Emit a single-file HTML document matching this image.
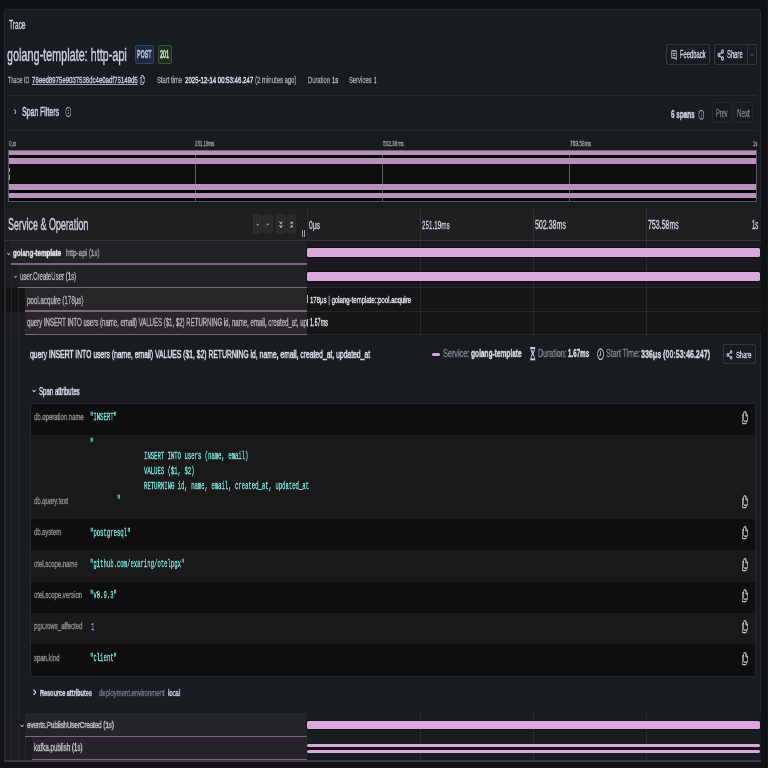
<!DOCTYPE html>
<html><head><meta charset="utf-8"><style>
html,body{margin:0;padding:0;width:768px;height:768px;overflow:hidden;background:#111217}
.r{position:absolute;margin:0;padding:0}
.t{position:absolute;white-space:pre;line-height:0;transform-origin:0 0;font-family:"Liberation Sans",sans-serif;-webkit-text-stroke:0.45px currentColor;will-change:transform}
</style></head><body>
<div class="r" style="left:0.00px;top:0.00px;width:768.00px;height:768.00px;background:#111217;"></div>
<div class="r" style="left:761.50px;top:9.00px;width:6.50px;height:759.00px;background:#101115;"></div>
<div class="r" style="left:766.50px;top:0.00px;width:1.50px;height:768.00px;background:#16171b;"></div>
<div class="r" style="left:3.70px;top:9.40px;width:757.80px;height:752.20px;box-sizing:border-box;border:1px solid #26282c;background:#181b1f;border-radius:3px;"></div>
<div class="t" style="left:8.75px;top:24.59px;font-size:11.92px;font-family:'Liberation Sans', sans-serif;font-weight:normal;color:#ccccdc;transform:scaleX(0.5494);">Trace</div>
<div class="t" style="left:7.44px;top:54.77px;font-size:17.87px;font-family:'Liberation Sans', sans-serif;font-weight:normal;color:#ccccdc;transform:scaleX(0.6064);">golang-template: http-api</div>
<div class="r" style="left:134.90px;top:45.20px;width:19.30px;height:19.20px;box-sizing:border-box;border:1px solid #2d4466;background:#1e2a3c;border-radius:2px;"></div>
<div class="t" style="left:136.84px;top:54.29px;font-size:11.63px;font-family:'Liberation Sans', sans-serif;font-weight:bold;color:#a9bde6;transform:scaleX(0.4617);">POST</div>
<div class="r" style="left:158.10px;top:45.20px;width:13.60px;height:19.20px;box-sizing:border-box;border:1px solid #36543a;background:#1f2b21;border-radius:2px;"></div>
<div class="t" style="left:160.31px;top:54.35px;font-size:11.46px;font-family:'Liberation Sans', sans-serif;font-weight:bold;color:#b9dfa8;transform:scaleX(0.4728);">201</div>
<div class="t" style="left:8.37px;top:79.69px;font-size:9.88px;font-family:'Liberation Sans', sans-serif;font-weight:normal;color:#a0a1aa;transform:scaleX(0.5726);">Trace ID</div>
<div class="t" style="left:31.99px;top:79.69px;font-size:9.88px;font-family:'Liberation Sans', sans-serif;font-weight:normal;color:#ccccdc;transform:scaleX(0.6128);">78eed8975e9037536dc4e0adf75149d5</div>
<div class="r" style="left:31.90px;top:84.30px;width:106.00px;height:0.80px;background:#a4a4ae;"></div>
<svg class="r" style="left:139.23px;top:74.23px;width:6.93px;height:11.64px;" viewBox="0 0 24 24" preserveAspectRatio="none"><path d="M21,8.94a1.31,1.31,0,0,0-.06-.27l0-.09a1.07,1.07,0,0,0-.19-.28h0l-6-6h0a1.07,1.07,0,0,0-.28-.19.32.32,0,0,0-.09,0A.88.88,0,0,0,14.05,2H10A3,3,0,0,0,7,5V6H6A3,3,0,0,0,3,9V19a3,3,0,0,0,3,3h8a3,3,0,0,0,3-3V18h1a3,3,0,0,0,3-3V9S21,9,21,8.94ZM15,5.41,17.59,8H16a1,1,0,0,1-1-1ZM15,19a1,1,0,0,1-1,1H6a1,1,0,0,1-1-1V9A1,1,0,0,1,6,8H7v7a3,3,0,0,0,3,3h5Zm4-4a1,1,0,0,1-1,1H10a1,1,0,0,1-1-1V5a1,1,0,0,1,1-1h3V7a3,3,0,0,0,3,3h3Z" fill="#b8b8c2"/></svg>
<div class="t" style="left:157.13px;top:79.69px;font-size:9.88px;font-family:'Liberation Sans', sans-serif;font-weight:normal;color:#a0a1aa;transform:scaleX(0.5942);">Start time</div>
<div class="t" style="left:184.79px;top:79.74px;font-size:9.74px;font-family:'Liberation Sans', sans-serif;font-weight:normal;color:#d4d4de;transform:scaleX(0.6236);-webkit-text-stroke:0.65px currentColor">2025-12-14 00:53:46.247</div>
<div class="t" style="left:255.33px;top:79.69px;font-size:9.88px;font-family:'Liberation Sans', sans-serif;font-weight:normal;color:#a0a1aa;transform:scaleX(0.6049);">(2 minutes ago)</div>
<div class="t" style="left:307.92px;top:79.69px;font-size:9.88px;font-family:'Liberation Sans', sans-serif;font-weight:normal;color:#a0a1aa;transform:scaleX(0.5876);">Duration</div>
<div class="t" style="left:331.86px;top:79.69px;font-size:9.88px;font-family:'Liberation Sans', sans-serif;font-weight:normal;color:#b4b5bd;transform:scaleX(0.5788);">1s</div>
<div class="t" style="left:349.14px;top:79.69px;font-size:9.88px;font-family:'Liberation Sans', sans-serif;font-weight:normal;color:#a0a1aa;transform:scaleX(0.5904);">Services</div>
<div class="t" style="left:374.16px;top:79.69px;font-size:9.88px;font-family:'Liberation Sans', sans-serif;font-weight:normal;color:#b4b5bd;transform:scaleX(0.4459);">1</div>
<div class="r" style="left:666.40px;top:44.20px;width:43.80px;height:20.60px;box-sizing:border-box;border:1px solid #34363b;background:#181b1f;border-radius:2px;"></div>
<svg class="r" style="left:670.50px;top:49.50px;width:6.00px;height:10.50px;" viewBox="0 0 24 24" preserveAspectRatio="none"><path d="M3 2h18v20l-4.5-4H3z" fill="none" stroke="#ccccdc" stroke-width="3" stroke-linejoin="round"/><path d="M7 8h10M7 12h10" stroke="#ccccdc" stroke-width="2.4"/></svg>
<div class="t" style="left:680.17px;top:54.84px;font-size:10.32px;font-family:'Liberation Sans', sans-serif;font-weight:normal;color:#ccccdc;transform:scaleX(0.5631);">Feedback</div>
<div class="r" style="left:713.60px;top:44.20px;width:43.30px;height:20.60px;box-sizing:border-box;border:1px solid #34363b;background:#181b1f;border-radius:2px;"></div>
<div class="r" style="left:746.60px;top:44.20px;width:1.00px;height:20.60px;background:#34363b;"></div>
<svg class="r" style="left:717.10px;top:48.90px;width:7.50px;height:12.00px;" viewBox="0 0 24 24" preserveAspectRatio="none"><circle cx="17.5" cy="5" r="3" fill="none" stroke="#ccccdc" stroke-width="2.8"/><circle cx="6" cy="12" r="3" fill="none" stroke="#ccccdc" stroke-width="2.8"/><circle cx="17.5" cy="19" r="3" fill="none" stroke="#ccccdc" stroke-width="2.8"/><path d="M8.5 10.5L15 6.5M8.5 13.5l6.5 4" stroke="#ccccdc" stroke-width="2.6"/></svg>
<div class="t" style="left:727.13px;top:54.84px;font-size:10.32px;font-family:'Liberation Sans', sans-serif;font-weight:normal;color:#ccccdc;transform:scaleX(0.5712);">Share</div>
<svg class="r" style="left:749.50px;top:52.50px;width:4.00px;height:4.00px;" viewBox="0 0 24 24" preserveAspectRatio="none"><path d="M5 8l7 8 7-8" fill="none" stroke="#ccccdc" stroke-width="3"/></svg>
<div class="r" style="left:8.10px;top:94.70px;width:748.70px;height:1.00px;background:#26282c;"></div>
<div class="r" style="left:8.10px;top:130.10px;width:748.70px;height:1.00px;background:#26282c;"></div>
<svg class="r" style="left:13.80px;top:108.70px;width:2.50px;height:5.80px;" viewBox="0 0 24 24" preserveAspectRatio="none"><path d="M3 2l18 10-18 10" fill="none" stroke="#dcdce4" stroke-width="5"/></svg>
<div class="t" style="left:22.49px;top:112.14px;font-size:12.06px;font-family:'Liberation Sans', sans-serif;font-weight:normal;color:#ccccdc;transform:scaleX(0.5743);-webkit-text-stroke:0.6px currentColor">Span Filters</div>
<svg class="r" style="left:64.60px;top:106.00px;width:6.80px;height:12.00px;" viewBox="0 0 24 24" preserveAspectRatio="none"><path d="M12,2A10,10,0,1,0,22,12,10,10,0,0,0,12,2Zm0,18a8,8,0,1,1,8-8A8,8,0,0,1,12,20Zm0-8.5a1,1,0,0,0-1,1v3a1,1,0,0,0,2,0v-3A1,1,0,0,0,12,11.5Zm0-4a1.25,1.25,0,1,0,1.25,1.25A1.25,1.25,0,0,0,12,7.5Z" fill="#b4b4bc"/></svg>
<div class="t" style="left:670.67px;top:113.85px;font-size:10.60px;font-family:'Liberation Sans', sans-serif;font-weight:bold;color:#ccccdc;transform:scaleX(0.6003);">6 spans</div>
<svg class="r" style="left:697.70px;top:109.00px;width:6.60px;height:11.60px;" viewBox="0 0 24 24" preserveAspectRatio="none"><path d="M12,2A10,10,0,1,0,22,12,10,10,0,0,0,12,2Zm0,18a8,8,0,1,1,8-8A8,8,0,0,1,12,20Zm0-8.5a1,1,0,0,0-1,1v3a1,1,0,0,0,2,0v-3A1,1,0,0,0,12,11.5Zm0-4a1.25,1.25,0,1,0,1.25,1.25A1.25,1.25,0,0,0,12,7.5Z" fill="#b4b4bc"/></svg>
<div class="r" style="left:712.00px;top:102.30px;width:19.70px;height:21.10px;box-sizing:border-box;border:1px solid #25272b;background:#181b1f;border-radius:2px;"></div>
<div class="t" style="left:715.94px;top:113.59px;font-size:10.47px;font-family:'Liberation Sans', sans-serif;font-weight:normal;color:#7b7c84;transform:scaleX(0.5334);">Prev</div>
<div class="r" style="left:733.10px;top:102.30px;width:20.40px;height:21.10px;box-sizing:border-box;border:1px solid #25272b;background:#181b1f;border-radius:2px;"></div>
<div class="t" style="left:736.59px;top:113.59px;font-size:10.47px;font-family:'Liberation Sans', sans-serif;font-weight:normal;color:#7b7c84;transform:scaleX(0.5927);">Next</div>
<div class="t" style="left:8.53px;top:143.79px;font-size:7.88px;font-family:'Liberation Sans', sans-serif;font-weight:normal;color:#94959c;transform:scaleX(0.5463);">0μs</div>
<div class="t" style="left:195.48px;top:143.99px;font-size:7.88px;font-family:'Liberation Sans', sans-serif;font-weight:normal;color:#94959c;transform:scaleX(0.5573);">251.19ms</div>
<div class="t" style="left:382.81px;top:143.95px;font-size:7.99px;font-family:'Liberation Sans', sans-serif;font-weight:normal;color:#94959c;transform:scaleX(0.5884);">502.38ms</div>
<div class="t" style="left:569.95px;top:143.95px;font-size:7.99px;font-family:'Liberation Sans', sans-serif;font-weight:normal;color:#94959c;transform:scaleX(0.5987);">753.58ms</div>
<div class="t" style="left:752.50px;top:143.95px;font-size:7.99px;font-family:'Liberation Sans', sans-serif;font-weight:normal;color:#94959c;transform:scaleX(0.5000);">1s</div>
<div class="r" style="left:8.10px;top:150.00px;width:748.65px;height:51.40px;background:#0e0e0e;"></div>
<div class="r" style="left:9.10px;top:150.40px;width:747.10px;height:8.00px;background:#020202;"></div>
<div class="r" style="left:8.70px;top:150.40px;width:747.50px;height:4.40px;background:#b98fbd;"></div>
<div class="r" style="left:9.10px;top:158.40px;width:747.10px;height:6.10px;background:#020202;"></div>
<div class="r" style="left:8.70px;top:158.20px;width:747.50px;height:5.40px;background:#b98fbd;"></div>
<div class="r" style="left:8.60px;top:168.00px;width:1.00px;height:4.00px;background:#b98fbd;"></div>
<div class="r" style="left:8.60px;top:175.00px;width:1.00px;height:5.00px;background:#b98fbd;"></div>
<div class="r" style="left:9.10px;top:184.00px;width:747.10px;height:17.00px;background:#020202;"></div>
<div class="r" style="left:9.40px;top:184.20px;width:746.80px;height:5.50px;background:#b98fbd;"></div>
<div class="r" style="left:9.40px;top:193.00px;width:746.80px;height:5.40px;background:#b98fbd;"></div>
<div class="r" style="left:195.10px;top:150.00px;width:1.00px;height:51.40px;background:rgba(150,150,150,0.6);"></div>
<div class="r" style="left:382.00px;top:150.00px;width:1.00px;height:51.40px;background:rgba(150,150,150,0.6);"></div>
<div class="r" style="left:569.10px;top:150.00px;width:1.00px;height:51.40px;background:rgba(150,150,150,0.6);"></div>
<div class="r" style="left:8.10px;top:150.00px;width:748.65px;height:51.60px;background:transparent;box-sizing:border-box;border:1px solid #5a5a5c;border-top-color:#6a6a6c"></div>
<div class="r" style="left:4.70px;top:207.60px;width:756.20px;height:32.60px;background:#1f1f20;"></div>
<div class="r" style="left:4.70px;top:239.70px;width:756.20px;height:1.00px;background:#333336;"></div>
<div class="t" style="left:8.09px;top:224.53px;font-size:15.84px;font-family:'Liberation Sans', sans-serif;font-weight:normal;color:#ccccdc;transform:scaleX(0.5670);">Service &amp; Operation</div>
<div class="r" style="left:253.00px;top:213.50px;width:9.10px;height:20.80px;box-sizing:border-box;border:1px solid #2e2e30;background:#2a2a2c;border-radius:2px;"></div>
<div class="r" style="left:262.50px;top:213.50px;width:10.10px;height:20.80px;box-sizing:border-box;border:1px solid #2e2e30;background:#2a2a2c;border-radius:2px;"></div>
<div class="r" style="left:276.20px;top:213.50px;width:10.00px;height:20.80px;box-sizing:border-box;border:1px solid #2e2e30;background:#2a2a2c;border-radius:2px;"></div>
<div class="r" style="left:286.70px;top:213.50px;width:9.30px;height:20.80px;box-sizing:border-box;border:1px solid #2e2e30;background:#2a2a2c;border-radius:2px;"></div>
<svg class="r" style="left:255.60px;top:222.80px;width:3.80px;height:3.20px;" viewBox="0 0 24 24" preserveAspectRatio="none"><path d="M2 5l10 14 10-14" fill="none" stroke="#d0d0d4" stroke-width="5"/></svg>
<svg class="r" style="left:265.60px;top:222.60px;width:3.80px;height:3.20px;" viewBox="0 0 24 24" preserveAspectRatio="none"><path d="M2 19l10-14 10 14" fill="none" stroke="#d0d0d4" stroke-width="5"/></svg>
<svg class="r" style="left:279.40px;top:220.60px;width:3.80px;height:7.40px;" viewBox="0 0 24 24" preserveAspectRatio="none"><path d="M3 2l9 7 9-7M3 14l9 7 9-7" fill="none" stroke="#d0d0d4" stroke-width="4"/></svg>
<svg class="r" style="left:289.60px;top:220.60px;width:3.80px;height:7.40px;" viewBox="0 0 24 24" preserveAspectRatio="none"><path d="M3 10l9-7 9 7M3 22l9-7 9 7" fill="none" stroke="#d0d0d4" stroke-width="4"/></svg>
<div class="r" style="left:302.40px;top:229.70px;width:0.80px;height:7.80px;background:#9a9a9a;"></div>
<div class="r" style="left:304.00px;top:229.70px;width:0.80px;height:7.80px;background:#9a9a9a;"></div>
<div class="t" style="left:308.54px;top:224.65px;font-size:11.74px;font-family:'Liberation Sans', sans-serif;font-weight:normal;color:#ccccdc;transform:scaleX(0.5742);">0μs</div>
<div class="t" style="left:421.58px;top:224.65px;font-size:11.74px;font-family:'Liberation Sans', sans-serif;font-weight:normal;color:#ccccdc;transform:scaleX(0.5380);">251.19ms</div>
<div class="t" style="left:534.92px;top:224.59px;font-size:11.92px;font-family:'Liberation Sans', sans-serif;font-weight:normal;color:#ccccdc;transform:scaleX(0.5910);">502.38ms</div>
<div class="t" style="left:648.34px;top:224.59px;font-size:11.92px;font-family:'Liberation Sans', sans-serif;font-weight:normal;color:#ccccdc;transform:scaleX(0.5867);">753.58ms</div>
<div class="t" style="left:751.85px;top:224.59px;font-size:11.92px;font-family:'Liberation Sans', sans-serif;font-weight:normal;color:#ccccdc;transform:scaleX(0.4978);">1s</div>
<div class="r" style="left:4.70px;top:240.70px;width:302.50px;height:23.90px;background:#212226;"></div>
<div class="r" style="left:307.20px;top:240.70px;width:453.70px;height:23.90px;background:#17191d;"></div>
<div class="r" style="left:4.70px;top:240.70px;width:6.55px;height:23.90px;background:#1c1d21;"></div>
<div class="r" style="left:4.50px;top:240.70px;width:1.00px;height:23.90px;background:#26272b;"></div>
<div class="r" style="left:11.25px;top:263.20px;width:295.95px;height:1.40px;background:#7d6382;"></div>
<div class="r" style="left:4.70px;top:264.60px;width:302.50px;height:23.40px;background:#212226;"></div>
<div class="r" style="left:307.20px;top:264.60px;width:453.70px;height:23.40px;background:#17191d;"></div>
<div class="r" style="left:4.70px;top:264.60px;width:6.55px;height:23.40px;background:#1c1d21;"></div>
<div class="r" style="left:4.50px;top:264.60px;width:1.00px;height:23.40px;background:#26272b;"></div>
<div class="r" style="left:11.25px;top:264.60px;width:7.15px;height:23.40px;background:#1c1d21;"></div>
<div class="r" style="left:11.05px;top:264.60px;width:1.00px;height:23.40px;background:#26272b;"></div>
<div class="r" style="left:18.40px;top:286.60px;width:288.80px;height:1.40px;background:#7d6382;"></div>
<div class="r" style="left:307.20px;top:287.00px;width:453.70px;height:1.20px;background:#252628;"></div>
<div class="r" style="left:4.70px;top:288.00px;width:302.50px;height:23.80px;background:#282527;"></div>
<div class="r" style="left:307.20px;top:288.00px;width:453.70px;height:23.80px;background:#151515;"></div>
<div class="r" style="left:4.70px;top:288.00px;width:6.55px;height:23.80px;background:#141213;"></div>
<div class="r" style="left:4.50px;top:288.00px;width:1.00px;height:23.80px;background:#26272b;"></div>
<div class="r" style="left:11.25px;top:288.00px;width:7.15px;height:23.80px;background:#141213;"></div>
<div class="r" style="left:11.05px;top:288.00px;width:1.00px;height:23.80px;background:#26272b;"></div>
<div class="r" style="left:18.40px;top:288.00px;width:6.60px;height:23.80px;background:#141213;"></div>
<div class="r" style="left:18.20px;top:288.00px;width:1.00px;height:23.80px;background:#26272b;"></div>
<div class="r" style="left:25.00px;top:310.40px;width:282.20px;height:1.40px;background:#7d6382;"></div>
<div class="r" style="left:307.20px;top:310.80px;width:453.70px;height:1.20px;background:#252628;"></div>
<div class="r" style="left:4.70px;top:311.80px;width:302.50px;height:23.20px;background:#28262b;"></div>
<div class="r" style="left:307.20px;top:311.80px;width:453.70px;height:23.20px;background:#151515;"></div>
<div class="r" style="left:4.70px;top:311.80px;width:6.55px;height:23.20px;background:#1d1b1f;"></div>
<div class="r" style="left:4.50px;top:311.80px;width:1.00px;height:23.20px;background:#26272b;"></div>
<div class="r" style="left:11.25px;top:311.80px;width:7.15px;height:23.20px;background:#1d1b1f;"></div>
<div class="r" style="left:11.05px;top:311.80px;width:1.00px;height:23.20px;background:#26272b;"></div>
<div class="r" style="left:18.40px;top:311.80px;width:6.60px;height:23.20px;background:#1d1b1f;"></div>
<div class="r" style="left:18.20px;top:311.80px;width:1.00px;height:23.20px;background:#26272b;"></div>
<div class="r" style="left:25.00px;top:333.60px;width:282.20px;height:1.40px;background:#7d6382;"></div>
<div class="r" style="left:307.20px;top:334.00px;width:453.70px;height:1.20px;background:#252628;"></div>
<div class="r" style="left:419.75px;top:207.60px;width:1.00px;height:127.40px;background:rgba(120,120,130,0.18);"></div>
<div class="r" style="left:533.00px;top:207.60px;width:1.00px;height:127.40px;background:rgba(120,120,130,0.18);"></div>
<div class="r" style="left:646.25px;top:207.60px;width:1.00px;height:127.40px;background:rgba(120,120,130,0.18);"></div>
<div class="r" style="left:306.70px;top:207.60px;width:0.80px;height:32.60px;background:#2c2c2e;"></div>
<svg class="r" style="left:6.50px;top:251.80px;width:3.40px;height:3.70px;" viewBox="0 0 24 24" preserveAspectRatio="none"><path d="M3 5l9 14 9-14" fill="none" stroke="#e0e0e8" stroke-width="5.5"/></svg>
<div class="t" style="left:13.44px;top:253.37px;font-size:9.66px;font-family:'Liberation Sans', sans-serif;font-weight:bold;color:#e0e0e8;transform:scaleX(0.6443);">golang-template</div>
<div class="t" style="left:65.56px;top:253.37px;font-size:9.66px;font-family:'Liberation Sans', sans-serif;font-weight:normal;color:#a0a1aa;transform:scaleX(0.6524);">http-api (1s)</div>
<div class="r" style="left:307.20px;top:247.90px;width:452.90px;height:9.20px;background:#dba8dc;border-radius:1.5px;box-shadow:0 0 1px 1px rgba(0,0,0,0.3)"></div>
<svg class="r" style="left:13.50px;top:275.00px;width:3.10px;height:3.50px;" viewBox="0 0 24 24" preserveAspectRatio="none"><path d="M3 5l9 14 9-14" fill="none" stroke="#e0e0e8" stroke-width="5.5"/></svg>
<div class="t" style="left:20.01px;top:276.64px;font-size:10.32px;font-family:'Liberation Sans', sans-serif;font-weight:normal;color:#b0b0b8;transform:scaleX(0.5861);">user.CreateUser (1s)</div>
<div class="r" style="left:307.20px;top:271.60px;width:452.90px;height:9.40px;background:#dba8dc;border-radius:1.5px;box-shadow:0 0 1px 1px rgba(0,0,0,0.3)"></div>
<div class="t" style="left:26.80px;top:300.78px;font-size:10.49px;font-family:'Liberation Sans', sans-serif;font-weight:normal;color:#b0b0b8;transform:scaleX(0.5894);">pool.acquire (178μs)</div>
<div class="r" style="left:307.20px;top:295.40px;width:1.20px;height:7.80px;background:#dba8dc;"></div>
<div class="t" style="left:310.34px;top:300.17px;font-size:9.66px;font-family:'Liberation Sans', sans-serif;font-weight:normal;color:#d8d8e0;transform:scaleX(0.6249);-webkit-text-stroke:0.6px currentColor">178μs | golang-template::pool.acquire</div>
<div class="r" style="left:0;top:0;width:306.8px;height:768px;overflow:hidden">
<div class="t" style="left:26.95px;top:322.69px;font-size:10.17px;font-family:'Liberation Sans', sans-serif;font-weight:normal;color:#b0b0b8;transform:scaleX(0.5956);">query INSERT INTO users (name, email) VALUES ($1, $2) RETURNING id, name, email, created_at, updated_at</div>
</div>
<div class="r" style="left:307.20px;top:318.50px;width:1.20px;height:8.00px;background:#dba8dc;"></div>
<div class="t" style="left:310.39px;top:323.09px;font-size:10.47px;font-family:'Liberation Sans', sans-serif;font-weight:normal;color:#d8d8e0;transform:scaleX(0.5190);-webkit-text-stroke:0.6px currentColor">1.67ms</div>
<div class="r" style="left:4.50px;top:335.00px;width:1.00px;height:378.00px;background:#26272b;"></div>
<div class="r" style="left:11.05px;top:335.00px;width:1.00px;height:378.00px;background:#26272b;"></div>
<div class="r" style="left:18.20px;top:335.00px;width:1.00px;height:378.00px;background:#26272b;"></div>
<div class="t" style="left:30.12px;top:353.84px;font-size:11.19px;font-family:'Liberation Sans', sans-serif;font-weight:normal;color:#d8d8e0;transform:scaleX(0.6058);-webkit-text-stroke:0.65px currentColor">query INSERT INTO users (name, email) VALUES ($1, $2) RETURNING id, name, email, created_at, updated_at</div>
<div class="r" style="left:432.00px;top:352.70px;width:8.20px;height:3.80px;background:#dba8dc;border-radius:2px"></div>
<div class="t" style="left:443.37px;top:353.69px;font-size:10.17px;font-family:'Liberation Sans', sans-serif;font-weight:normal;color:#80818a;transform:scaleX(0.7187);">Service:</div>
<div class="t" style="left:471.13px;top:353.49px;font-size:10.76px;font-family:'Liberation Sans', sans-serif;font-weight:bold;color:#d8d8e0;transform:scaleX(0.6098);">golang-template</div>
<svg class="r" style="left:530.20px;top:347.30px;width:5.40px;height:13.40px;" viewBox="0 0 24 24" preserveAspectRatio="none"><rect x="1" y="0" width="22" height="3.5" fill="#ccccdc"/><rect x="1" y="20.5" width="22" height="3.5" fill="#ccccdc"/><path d="M5 3v3c0 3 5 5 7 6 2-1 7-3 7-6V3M5 21v-3c0-3 5-5 7-6 2 1 7 3 7 6v3" fill="none" stroke="#ccccdc" stroke-width="3.5"/><path d="M8 6h8l-4 4z" fill="#ccccdc"/></svg>
<div class="t" style="left:538.12px;top:353.64px;font-size:10.32px;font-family:'Liberation Sans', sans-serif;font-weight:normal;color:#80818a;transform:scaleX(0.6835);">Duration:</div>
<div class="t" style="left:568.01px;top:353.49px;font-size:10.76px;font-family:'Liberation Sans', sans-serif;font-weight:bold;color:#d8d8e0;transform:scaleX(0.5797);">1.67ms</div>
<svg class="r" style="left:596.90px;top:347.60px;width:7.10px;height:12.50px;" viewBox="0 0 24 24" preserveAspectRatio="none"><circle cx="12" cy="12" r="10" fill="none" stroke="#b4b4bc" stroke-width="3"/><path d="M12 6v7l-4 2.5" fill="none" stroke="#b4b4bc" stroke-width="3"/></svg>
<div class="t" style="left:605.58px;top:353.69px;font-size:10.17px;font-family:'Liberation Sans', sans-serif;font-weight:normal;color:#80818a;transform:scaleX(0.6869);">Start Time:</div>
<div class="t" style="left:641.24px;top:353.55px;font-size:10.60px;font-family:'Liberation Sans', sans-serif;font-weight:bold;color:#d8d8e0;transform:scaleX(0.6703);">336μs (00:53:46.247)</div>
<div class="r" style="left:722.60px;top:344.00px;width:33.10px;height:20.30px;box-sizing:border-box;border:1px solid #34363b;background:#181b1f;border-radius:2px;"></div>
<svg class="r" style="left:726.20px;top:349.80px;width:7.00px;height:9.80px;" viewBox="0 0 24 24" preserveAspectRatio="none"><circle cx="17.5" cy="5" r="3" fill="none" stroke="#ccccdc" stroke-width="2.8"/><circle cx="6" cy="12" r="3" fill="none" stroke="#ccccdc" stroke-width="2.8"/><circle cx="17.5" cy="19" r="3" fill="none" stroke="#ccccdc" stroke-width="2.8"/><path d="M8.5 10.5L15 6.5M8.5 13.5l6.5 4" stroke="#ccccdc" stroke-width="2.6"/></svg>
<div class="t" style="left:736.34px;top:354.64px;font-size:9.74px;font-family:'Liberation Sans', sans-serif;font-weight:normal;color:#ccccdc;transform:scaleX(0.5933);">Share</div>
<svg class="r" style="left:32.20px;top:389.40px;width:4.10px;height:3.90px;" viewBox="0 0 24 24" preserveAspectRatio="none"><path d="M3 5l9 14 9-14" fill="none" stroke="#e0e0e8" stroke-width="5.5"/></svg>
<div class="t" style="left:39.33px;top:392.04px;font-size:10.31px;font-family:'Liberation Sans', sans-serif;font-weight:normal;color:#ccccdc;transform:scaleX(0.5867);-webkit-text-stroke:0.7px currentColor">Span attributes</div>
<div class="r" style="left:30.70px;top:403.75px;width:724.00px;height:31.15px;background:#0e0e0e;"></div>
<div class="r" style="left:30.70px;top:434.90px;width:724.00px;height:84.00px;background:#191919;"></div>
<div class="r" style="left:30.70px;top:518.90px;width:724.00px;height:31.40px;background:#0e0e0e;"></div>
<div class="r" style="left:30.70px;top:550.30px;width:724.00px;height:31.40px;background:#191919;"></div>
<div class="r" style="left:30.70px;top:581.70px;width:724.00px;height:31.30px;background:#0e0e0e;"></div>
<div class="r" style="left:30.70px;top:613.00px;width:724.00px;height:31.40px;background:#191919;"></div>
<div class="r" style="left:30.70px;top:644.40px;width:724.00px;height:31.20px;background:#0e0e0e;"></div>
<div class="r" style="left:29.80px;top:402.60px;width:725.80px;height:274.00px;background:transparent;box-sizing:border-box;border:1px solid #262628"></div>
<div class="t" style="left:33.65px;top:417.09px;font-size:9.38px;font-family:'Liberation Sans', sans-serif;font-weight:normal;color:#8a8a90;transform:scaleX(0.6353);">db.operation.name</div>
<div class="t" style="left:90.44px;top:417.45px;font-size:10.90px;font-family:'Liberation Mono', monospace;font-weight:normal;color:#7cdcd4;transform:scaleX(0.5153);">"INSERT"</div>
<svg class="r" style="left:741.00px;top:409.92px;width:8.00px;height:15.60px;" viewBox="0 0 24 24" preserveAspectRatio="none"><path d="M21,8.94a1.31,1.31,0,0,0-.06-.27l0-.09a1.07,1.07,0,0,0-.19-.28h0l-6-6h0a1.07,1.07,0,0,0-.28-.19.32.32,0,0,0-.09,0A.88.88,0,0,0,14.05,2H10A3,3,0,0,0,7,5V6H6A3,3,0,0,0,3,9V19a3,3,0,0,0,3,3h8a3,3,0,0,0,3-3V18h1a3,3,0,0,0,3-3V9S21,9,21,8.94ZM15,5.41,17.59,8H16a1,1,0,0,1-1-1ZM15,19a1,1,0,0,1-1,1H6a1,1,0,0,1-1-1V9A1,1,0,0,1,6,8H7v7a3,3,0,0,0,3,3h5Zm4-4a1,1,0,0,1-1,1H10a1,1,0,0,1-1-1V5a1,1,0,0,1,1-1h3V7a3,3,0,0,0,3,3h3Z" fill="#c8c8d2"/></svg>
<div class="t" style="left:90.44px;top:443.32px;font-size:10.90px;font-family:'Liberation Mono', monospace;font-weight:normal;color:#7cdcd4;transform:scaleX(0.5153);">"</div>
<div class="t" style="left:143.85px;top:456.42px;font-size:10.90px;font-family:'Liberation Mono', monospace;font-weight:normal;color:#7cdcd4;transform:scaleX(0.5153);">INSERT INTO users (name, email)</div>
<div class="t" style="left:144.37px;top:471.22px;font-size:10.90px;font-family:'Liberation Mono', monospace;font-weight:normal;color:#7cdcd4;transform:scaleX(0.5153);">VALUES ($1, $2)</div>
<div class="t" style="left:143.96px;top:486.02px;font-size:10.90px;font-family:'Liberation Mono', monospace;font-weight:normal;color:#7cdcd4;transform:scaleX(0.5153);">RETURNING id, name, email, created_at, updated_at</div>
<div class="t" style="left:117.44px;top:500.32px;font-size:10.90px;font-family:'Liberation Mono', monospace;font-weight:normal;color:#7cdcd4;transform:scaleX(0.5153);">"</div>
<div class="t" style="left:33.65px;top:501.27px;font-size:9.38px;font-family:'Liberation Sans', sans-serif;font-weight:normal;color:#8a8a90;transform:scaleX(0.6353);">db.query.text</div>
<svg class="r" style="left:741.00px;top:494.20px;width:8.00px;height:15.60px;" viewBox="0 0 24 24" preserveAspectRatio="none"><path d="M21,8.94a1.31,1.31,0,0,0-.06-.27l0-.09a1.07,1.07,0,0,0-.19-.28h0l-6-6h0a1.07,1.07,0,0,0-.28-.19.32.32,0,0,0-.09,0A.88.88,0,0,0,14.05,2H10A3,3,0,0,0,7,5V6H6A3,3,0,0,0,3,9V19a3,3,0,0,0,3,3h8a3,3,0,0,0,3-3V18h1a3,3,0,0,0,3-3V9S21,9,21,8.94ZM15,5.41,17.59,8H16a1,1,0,0,1-1-1ZM15,19a1,1,0,0,1-1,1H6a1,1,0,0,1-1-1V9A1,1,0,0,1,6,8H7v7a3,3,0,0,0,3,3h5Zm4-4a1,1,0,0,1-1,1H10a1,1,0,0,1-1-1V5a1,1,0,0,1,1-1h3V7a3,3,0,0,0,3,3h3Z" fill="#c8c8d2"/></svg>
<div class="t" style="left:33.65px;top:532.37px;font-size:9.38px;font-family:'Liberation Sans', sans-serif;font-weight:normal;color:#8a8a90;transform:scaleX(0.6353);">db.system</div>
<div class="t" style="left:90.44px;top:532.72px;font-size:10.90px;font-family:'Liberation Mono', monospace;font-weight:normal;color:#7cdcd4;transform:scaleX(0.5153);">"postgresql"</div>
<svg class="r" style="left:741.00px;top:525.20px;width:8.00px;height:15.60px;" viewBox="0 0 24 24" preserveAspectRatio="none"><path d="M21,8.94a1.31,1.31,0,0,0-.06-.27l0-.09a1.07,1.07,0,0,0-.19-.28h0l-6-6h0a1.07,1.07,0,0,0-.28-.19.32.32,0,0,0-.09,0A.88.88,0,0,0,14.05,2H10A3,3,0,0,0,7,5V6H6A3,3,0,0,0,3,9V19a3,3,0,0,0,3,3h8a3,3,0,0,0,3-3V18h1a3,3,0,0,0,3-3V9S21,9,21,8.94ZM15,5.41,17.59,8H16a1,1,0,0,1-1-1ZM15,19a1,1,0,0,1-1,1H6a1,1,0,0,1-1-1V9A1,1,0,0,1,6,8H7v7a3,3,0,0,0,3,3h5Zm4-4a1,1,0,0,1-1,1H10a1,1,0,0,1-1-1V5a1,1,0,0,1,1-1h3V7a3,3,0,0,0,3,3h3Z" fill="#c8c8d2"/></svg>
<div class="t" style="left:33.65px;top:563.77px;font-size:9.38px;font-family:'Liberation Sans', sans-serif;font-weight:normal;color:#8a8a90;transform:scaleX(0.6353);">otel.scope.name</div>
<div class="t" style="left:90.44px;top:564.12px;font-size:10.90px;font-family:'Liberation Mono', monospace;font-weight:normal;color:#7cdcd4;transform:scaleX(0.5153);">"github.com/exaring/otelpgx"</div>
<svg class="r" style="left:741.00px;top:556.60px;width:8.00px;height:15.60px;" viewBox="0 0 24 24" preserveAspectRatio="none"><path d="M21,8.94a1.31,1.31,0,0,0-.06-.27l0-.09a1.07,1.07,0,0,0-.19-.28h0l-6-6h0a1.07,1.07,0,0,0-.28-.19.32.32,0,0,0-.09,0A.88.88,0,0,0,14.05,2H10A3,3,0,0,0,7,5V6H6A3,3,0,0,0,3,9V19a3,3,0,0,0,3,3h8a3,3,0,0,0,3-3V18h1a3,3,0,0,0,3-3V9S21,9,21,8.94ZM15,5.41,17.59,8H16a1,1,0,0,1-1-1ZM15,19a1,1,0,0,1-1,1H6a1,1,0,0,1-1-1V9A1,1,0,0,1,6,8H7v7a3,3,0,0,0,3,3h5Zm4-4a1,1,0,0,1-1,1H10a1,1,0,0,1-1-1V5a1,1,0,0,1,1-1h3V7a3,3,0,0,0,3,3h3Z" fill="#c8c8d2"/></svg>
<div class="t" style="left:33.65px;top:595.12px;font-size:9.38px;font-family:'Liberation Sans', sans-serif;font-weight:normal;color:#8a8a90;transform:scaleX(0.6353);">otel.scope.version</div>
<div class="t" style="left:90.44px;top:595.47px;font-size:10.90px;font-family:'Liberation Mono', monospace;font-weight:normal;color:#7cdcd4;transform:scaleX(0.5153);">"v0.9.3"</div>
<svg class="r" style="left:741.00px;top:587.95px;width:8.00px;height:15.60px;" viewBox="0 0 24 24" preserveAspectRatio="none"><path d="M21,8.94a1.31,1.31,0,0,0-.06-.27l0-.09a1.07,1.07,0,0,0-.19-.28h0l-6-6h0a1.07,1.07,0,0,0-.28-.19.32.32,0,0,0-.09,0A.88.88,0,0,0,14.05,2H10A3,3,0,0,0,7,5V6H6A3,3,0,0,0,3,9V19a3,3,0,0,0,3,3h8a3,3,0,0,0,3-3V18h1a3,3,0,0,0,3-3V9S21,9,21,8.94ZM15,5.41,17.59,8H16a1,1,0,0,1-1-1ZM15,19a1,1,0,0,1-1,1H6a1,1,0,0,1-1-1V9A1,1,0,0,1,6,8H7v7a3,3,0,0,0,3,3h5Zm4-4a1,1,0,0,1-1,1H10a1,1,0,0,1-1-1V5a1,1,0,0,1,1-1h3V7a3,3,0,0,0,3,3h3Z" fill="#c8c8d2"/></svg>
<div class="t" style="left:33.52px;top:626.47px;font-size:9.38px;font-family:'Liberation Sans', sans-serif;font-weight:normal;color:#8a8a90;transform:scaleX(0.6353);">pgx.rows_affected</div>
<div class="t" style="left:90.79px;top:626.82px;font-size:10.90px;font-family:'Liberation Mono', monospace;font-weight:normal;color:#8a8af0;transform:scaleX(0.5153);">1</div>
<svg class="r" style="left:741.00px;top:619.30px;width:8.00px;height:15.60px;" viewBox="0 0 24 24" preserveAspectRatio="none"><path d="M21,8.94a1.31,1.31,0,0,0-.06-.27l0-.09a1.07,1.07,0,0,0-.19-.28h0l-6-6h0a1.07,1.07,0,0,0-.28-.19.32.32,0,0,0-.09,0A.88.88,0,0,0,14.05,2H10A3,3,0,0,0,7,5V6H6A3,3,0,0,0,3,9V19a3,3,0,0,0,3,3h8a3,3,0,0,0,3-3V18h1a3,3,0,0,0,3-3V9S21,9,21,8.94ZM15,5.41,17.59,8H16a1,1,0,0,1-1-1ZM15,19a1,1,0,0,1-1,1H6a1,1,0,0,1-1-1V9A1,1,0,0,1,6,8H7v7a3,3,0,0,0,3,3h5Zm4-4a1,1,0,0,1-1,1H10a1,1,0,0,1-1-1V5a1,1,0,0,1,1-1h3V7a3,3,0,0,0,3,3h3Z" fill="#c8c8d2"/></svg>
<div class="t" style="left:33.73px;top:657.77px;font-size:9.38px;font-family:'Liberation Sans', sans-serif;font-weight:normal;color:#8a8a90;transform:scaleX(0.6353);">span.kind</div>
<div class="t" style="left:90.44px;top:658.12px;font-size:10.90px;font-family:'Liberation Mono', monospace;font-weight:normal;color:#7cdcd4;transform:scaleX(0.5153);">"client"</div>
<svg class="r" style="left:741.00px;top:650.60px;width:8.00px;height:15.60px;" viewBox="0 0 24 24" preserveAspectRatio="none"><path d="M21,8.94a1.31,1.31,0,0,0-.06-.27l0-.09a1.07,1.07,0,0,0-.19-.28h0l-6-6h0a1.07,1.07,0,0,0-.28-.19.32.32,0,0,0-.09,0A.88.88,0,0,0,14.05,2H10A3,3,0,0,0,7,5V6H6A3,3,0,0,0,3,9V19a3,3,0,0,0,3,3h8a3,3,0,0,0,3-3V18h1a3,3,0,0,0,3-3V9S21,9,21,8.94ZM15,5.41,17.59,8H16a1,1,0,0,1-1-1ZM15,19a1,1,0,0,1-1,1H6a1,1,0,0,1-1-1V9A1,1,0,0,1,6,8H7v7a3,3,0,0,0,3,3h5Zm4-4a1,1,0,0,1-1,1H10a1,1,0,0,1-1-1V5a1,1,0,0,1,1-1h3V7a3,3,0,0,0,3,3h3Z" fill="#c8c8d2"/></svg>
<svg class="r" style="left:32.80px;top:688.70px;width:3.20px;height:6.80px;" viewBox="0 0 24 24" preserveAspectRatio="none"><path d="M3 2l18 10-18 10" fill="none" stroke="#dcdce4" stroke-width="5"/></svg>
<div class="t" style="left:39.63px;top:693.15px;font-size:9.16px;font-family:'Liberation Sans', sans-serif;font-weight:bold;color:#ccccdc;transform:scaleX(0.6034);">Resource attributes</div>
<div class="t" style="left:98.55px;top:693.31px;font-size:8.69px;font-family:'Liberation Sans', sans-serif;font-weight:normal;color:#72737c;transform:scaleX(0.6900);">deployment.environment</div>
<div class="t" style="left:168.00px;top:693.31px;font-size:8.69px;font-family:'Liberation Sans', sans-serif;font-weight:normal;color:#ccccdc;transform:scaleX(0.6821);">local</div>
<div class="r" style="left:4.70px;top:713.00px;width:302.50px;height:24.00px;background:#1a1c20;"></div>
<div class="r" style="left:307.20px;top:713.00px;width:453.70px;height:24.00px;background:#181b1f;"></div>
<div class="r" style="left:4.70px;top:713.00px;width:6.55px;height:24.00px;background:#1b1c20;"></div>
<div class="r" style="left:4.50px;top:713.00px;width:1.00px;height:24.00px;background:#26272b;"></div>
<div class="r" style="left:11.25px;top:713.00px;width:7.15px;height:24.00px;background:#1b1c20;"></div>
<div class="r" style="left:11.05px;top:713.00px;width:1.00px;height:24.00px;background:#26272b;"></div>
<div class="r" style="left:18.40px;top:713.00px;width:6.60px;height:24.00px;background:#1b1c20;"></div>
<div class="r" style="left:18.20px;top:713.00px;width:1.00px;height:24.00px;background:#26272b;"></div>
<div class="r" style="left:25.00px;top:713.00px;width:282.20px;height:24.00px;background:#25242a;"></div>
<div class="r" style="left:25.00px;top:735.60px;width:282.20px;height:1.40px;background:#7d6382;"></div>
<div class="r" style="left:4.70px;top:737.00px;width:302.50px;height:23.30px;background:#1a1c20;"></div>
<div class="r" style="left:307.20px;top:737.00px;width:453.70px;height:23.30px;background:#181b1f;"></div>
<div class="r" style="left:4.70px;top:737.00px;width:6.55px;height:23.30px;background:#1b1c20;"></div>
<div class="r" style="left:4.50px;top:737.00px;width:1.00px;height:23.30px;background:#26272b;"></div>
<div class="r" style="left:11.25px;top:737.00px;width:7.15px;height:23.30px;background:#1b1c20;"></div>
<div class="r" style="left:11.05px;top:737.00px;width:1.00px;height:23.30px;background:#26272b;"></div>
<div class="r" style="left:18.40px;top:737.00px;width:6.60px;height:23.30px;background:#1b1c20;"></div>
<div class="r" style="left:18.20px;top:737.00px;width:1.00px;height:23.30px;background:#26272b;"></div>
<div class="r" style="left:25.00px;top:737.00px;width:6.90px;height:23.30px;background:#1b1c20;"></div>
<div class="r" style="left:24.80px;top:737.00px;width:1.00px;height:23.30px;background:#26272b;"></div>
<div class="r" style="left:31.90px;top:737.00px;width:275.30px;height:23.30px;background:#25242a;"></div>
<div class="r" style="left:31.90px;top:758.90px;width:275.30px;height:1.40px;background:#7d6382;"></div>
<div class="r" style="left:419.75px;top:713.00px;width:1.00px;height:47.60px;background:rgba(120,120,130,0.18);"></div>
<div class="r" style="left:533.00px;top:713.00px;width:1.00px;height:47.60px;background:rgba(120,120,130,0.18);"></div>
<div class="r" style="left:646.25px;top:713.00px;width:1.00px;height:47.60px;background:rgba(120,120,130,0.18);"></div>
<svg class="r" style="left:20.00px;top:724.30px;width:4.20px;height:3.60px;" viewBox="0 0 24 24" preserveAspectRatio="none"><path d="M3 5l9 14 9-14" fill="none" stroke="#e0e0e8" stroke-width="5.5"/></svg>
<div class="t" style="left:26.94px;top:725.40px;font-size:8.43px;font-family:'Liberation Sans', sans-serif;font-weight:normal;color:#c0c0c8;transform:scaleX(0.7285);">events.PublishUserCreated (1s)</div>
<div class="r" style="left:307.30px;top:720.80px;width:452.80px;height:8.40px;background:#dba8dc;border-radius:1.5px;box-shadow:0 0 1px 1px rgba(0,0,0,0.3)"></div>
<div class="t" style="left:33.98px;top:748.38px;font-size:10.21px;font-family:'Liberation Sans', sans-serif;font-weight:normal;color:#c0c0c8;transform:scaleX(0.6060);">kafka.publish (1s)</div>
<div class="r" style="left:307.30px;top:744.20px;width:452.80px;height:3.20px;background:#dba8dc;border-radius:1.5px"></div>
<div class="r" style="left:307.30px;top:749.60px;width:452.80px;height:3.10px;background:#dba8dc;border-radius:1.5px"></div>
<div class="r" style="left:307.30px;top:747.40px;width:453.00px;height:2.20px;background:#171313;"></div>
<div class="r" style="left:3.70px;top:760.30px;width:757.80px;height:1.30px;background:#3a3b3e;"></div>
</body></html>
